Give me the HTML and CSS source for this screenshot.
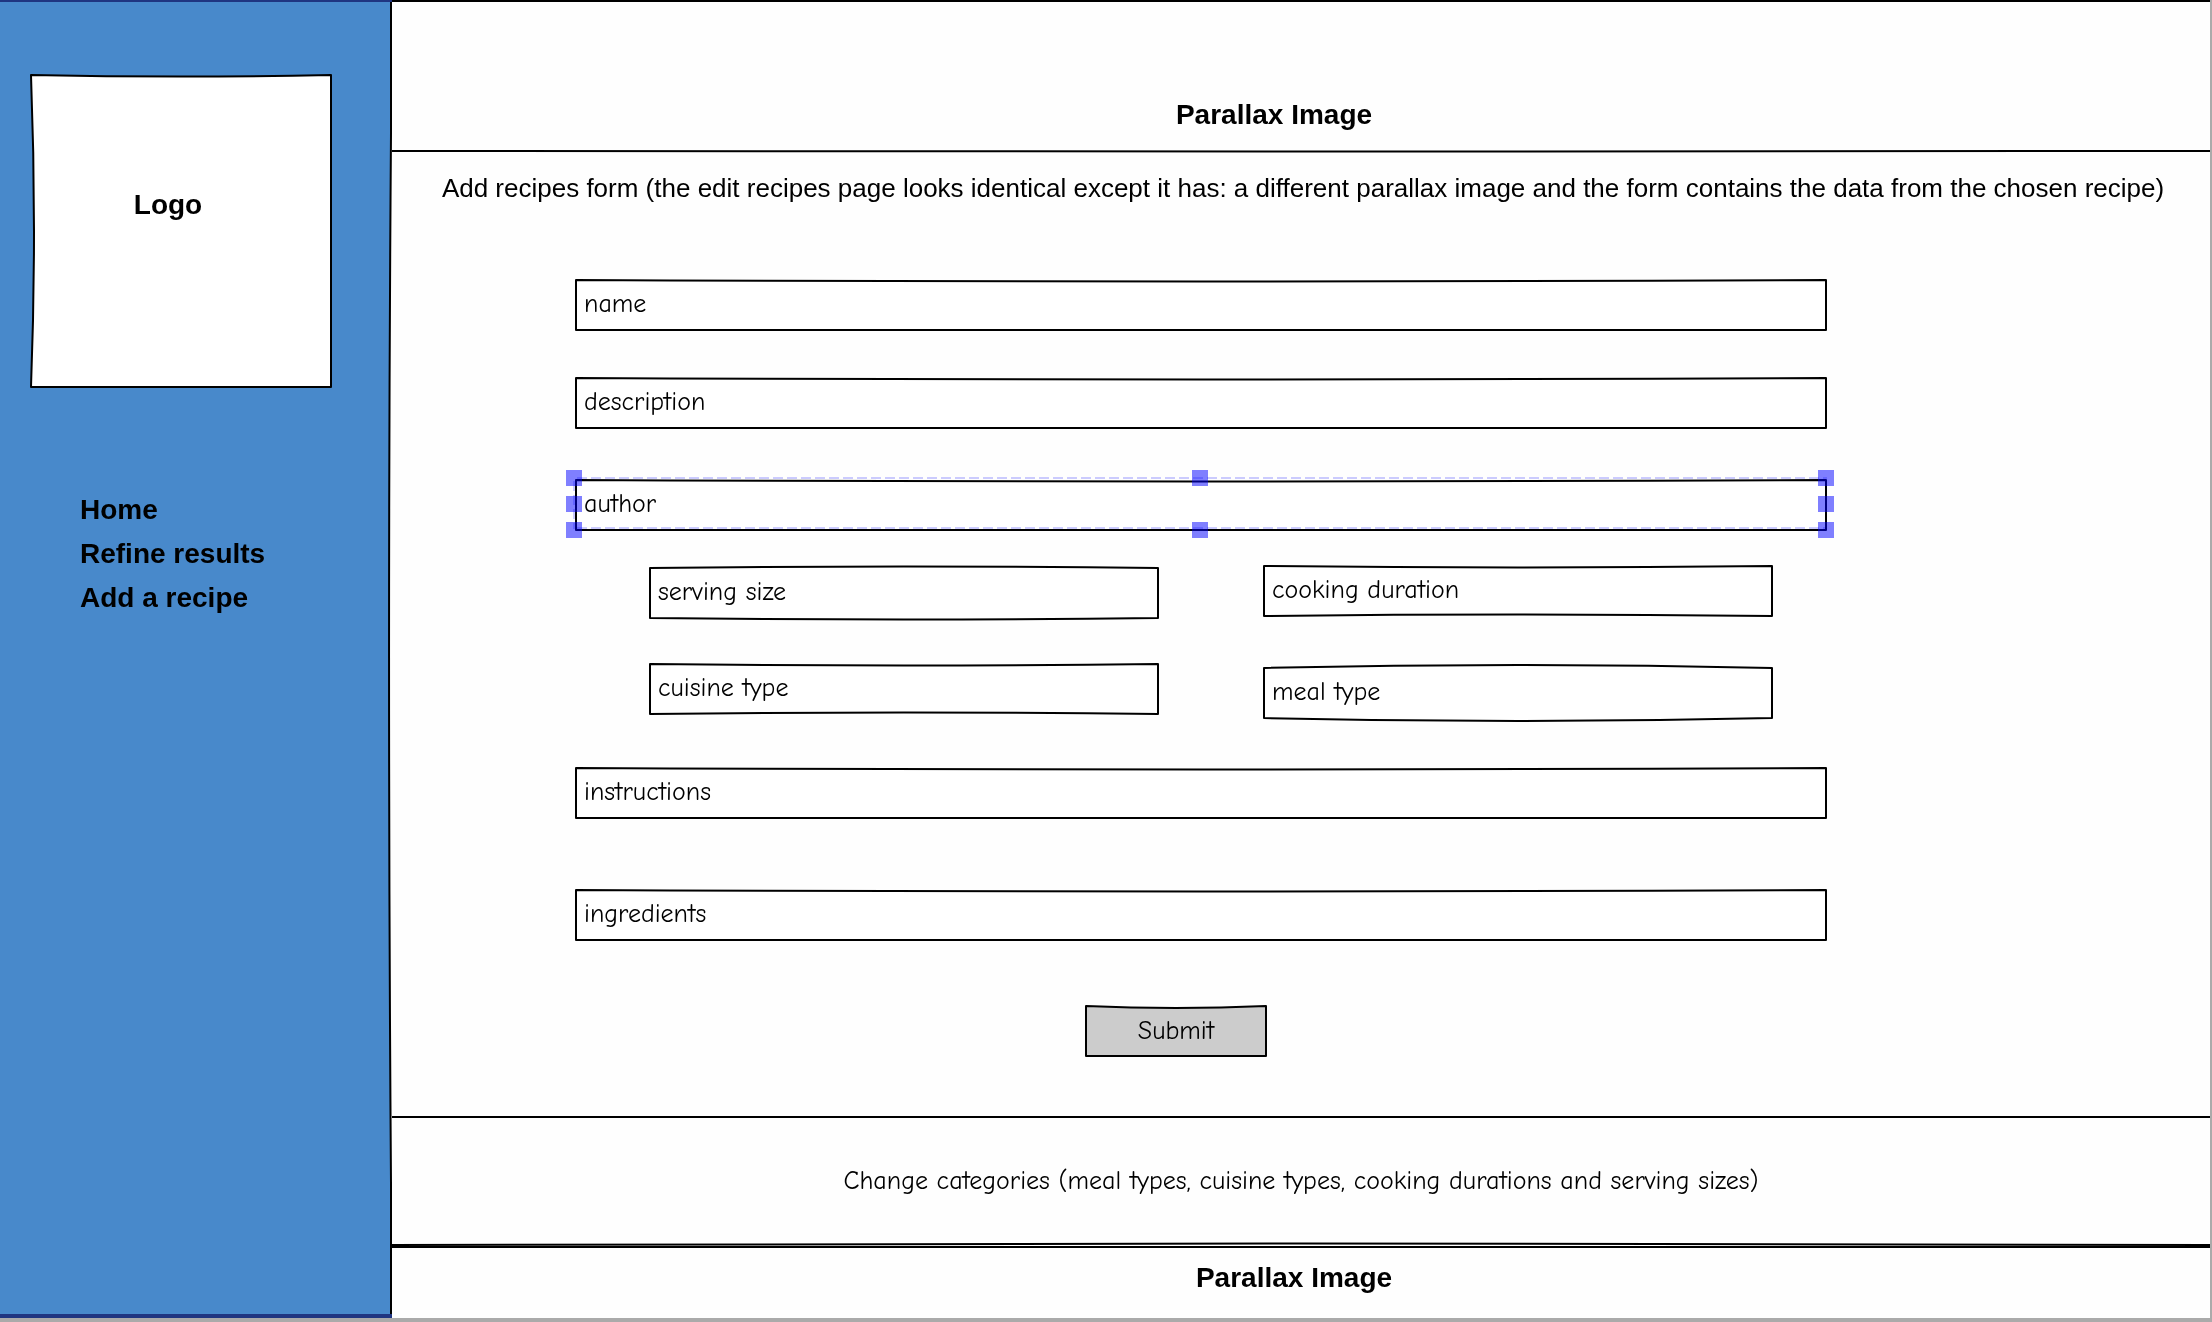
FILE: index.html
```html
<!DOCTYPE html>
<html lang="en">
<head>
<meta charset="utf-8">
<title>Add a recipe</title>
<link rel="stylesheet" href="styles.css">
</head>
<body>
<div class="page">
  <aside class="sidebar">
    <svg class="edge" viewBox="0 0 100 100" preserveAspectRatio="none" aria-hidden="true"><path class="panel" d="M0 0H100V10Q99 50 100 90V100H0Z"/><path class="stroke" d="M100 0V10Q99 50 100 90V100"/></svg>
    <div class="logo sketch">
      <svg class="outline" viewBox="0 0 100 100" preserveAspectRatio="none" aria-hidden="true"><path class="paper" d="M0 0Q50 1 100 0V100H0Q2 50 0 0Z"/></svg>
      <span class="title">Logo</span>
    </div>
    <nav class="nav">
      <a class="title" href="#home">Home</a>
      <a class="title" href="#refine">Refine results</a>
      <a class="title" href="#add">Add a recipe</a>
    </nav>
  </aside>
  <main class="main">
    <header class="hero">
      <h1 class="title">Parallax Image</h1>
      <svg class="rule" viewBox="0 0 100 2" preserveAspectRatio="none" aria-hidden="true"><path class="stroke" d="M0 1Q50 2 100 1"/></svg>
    </header>
    <section class="content">
      <p class="intro">Add recipes form (the edit recipes page looks identical except it has: a different parallax image and the form contains the data from the chosen recipe)</p>
      <form class="form">
        <div class="sketch name">
          <svg class="outline" viewBox="0 0 100 100" preserveAspectRatio="none" aria-hidden="true"><path class="paper" d="M0 0Q50 6 100 0V100H0Z"/></svg>
          <input class="input" type="text" aria-label="name" placeholder="name">
        </div>
        <div class="sketch description">
          <svg class="outline" viewBox="0 0 100 100" preserveAspectRatio="none" aria-hidden="true"><path class="paper" d="M0 0Q50 6 100 0V100H0Z"/></svg>
          <input class="input" type="text" aria-label="description" placeholder="description">
        </div>
        <div class="sketch author">
          <svg class="outline" viewBox="0 0 100 100" preserveAspectRatio="none" aria-hidden="true"><path class="paper" d="M0 0Q50 6 100 0V100H0Z"/></svg>
          <input class="input" type="text" aria-label="author" placeholder="author">
          <div class="selection" aria-hidden="true">
            <i class="handle"></i><i class="handle"></i><i class="handle"></i>
            <i class="handle"></i><i></i><i class="handle"></i>
            <i class="handle"></i><i class="handle"></i><i class="handle"></i>
          </div>
        </div>
        <div class="pairs">
          <div class="column">
            <div class="sketch">
              <svg class="outline" viewBox="0 0 100 100" preserveAspectRatio="none" aria-hidden="true"><path class="paper" d="M0 0Q50 -6 100 0V100Q50 106 0 100Z"/></svg>
              <input class="input" type="text" aria-label="serving size" placeholder="serving size">
            </div>
            <div class="sketch">
              <svg class="outline" viewBox="0 0 100 100" preserveAspectRatio="none" aria-hidden="true"><path class="paper" d="M0 0Q50 6 100 0V100Q50 94 0 100Z"/></svg>
              <input class="input" type="text" aria-label="cuisine type" placeholder="cuisine type">
            </div>
          </div>
          <div class="column column-right">
            <div class="sketch">
              <svg class="outline" viewBox="0 0 100 100" preserveAspectRatio="none" aria-hidden="true"><path class="paper" d="M0 0Q50 6 100 0V100Q50 94 0 100Z"/></svg>
              <input class="input" type="text" aria-label="cooking duration" placeholder="cooking duration">
            </div>
            <div class="sketch">
              <svg class="outline" viewBox="0 0 100 100" preserveAspectRatio="none" aria-hidden="true"><path class="paper" d="M0 0Q50 -12 100 0V100Q50 112 0 100Z"/></svg>
              <input class="input" type="text" aria-label="meal type" placeholder="meal type">
            </div>
          </div>
        </div>
        <div class="sketch instructions">
          <svg class="outline" viewBox="0 0 100 100" preserveAspectRatio="none" aria-hidden="true"><path class="paper" d="M0 0Q50 6 100 0V100H0Z"/></svg>
          <input class="input" type="text" aria-label="instructions" placeholder="instructions">
        </div>
        <div class="sketch ingredients">
          <svg class="outline" viewBox="0 0 100 100" preserveAspectRatio="none" aria-hidden="true"><path class="paper" d="M0 0Q50 6 100 0V100H0Z"/></svg>
          <input class="input" type="text" aria-label="ingredients" placeholder="ingredients">
        </div>
        <button class="submit sketch" type="submit">
          <svg class="outline" viewBox="0 0 100 100" preserveAspectRatio="none" aria-hidden="true"><path class="paper grey" d="M0 0Q50 8 100 0V100H0Z"/></svg>
          <span class="label">Submit</span>
        </button>
      </form>
    </section>
    <section class="categories">
      <p class="hand">Change categories (meal types, cuisine types, cooking durations and serving sizes)</p>
    </section>
    <footer class="footer">
      <svg class="rule" viewBox="0 0 100 2" preserveAspectRatio="none" aria-hidden="true"><path class="stroke" d="M0 1Q50 -2 100 1"/></svg>
      <h2 class="title">Parallax Image</h2>
    </footer>
  </main>
</div>
</body>
</html>
```
FILE: styles.css
```css
* {
  box-sizing: border-box;
}

body {
  margin: 0;
  background: #fefefe;
  color: #000;
  font-family: "Liberation Sans", Arial, sans-serif;
}

h1, h2, p {
  margin: 0;
}

.page {
  display: grid;
  grid-template-columns: 392px 1fr;
  min-height: 100vh;
  border-right: 2px solid #aaa;
  border-bottom: 4px solid #aaa;
}

.title {
  color: #000;
  font-size: 28px;
  font-weight: bold;
  line-height: 32px;
  text-decoration: none;
}

.stroke {
  fill: none;
  stroke: #000;
  stroke-width: 2px;
  vector-effect: non-scaling-stroke;
}

.panel {
  fill: #4889cb;
}

.paper {
  fill: #fff;
  stroke: #000;
  stroke-width: 2px;
  stroke-linejoin: round;
  vector-effect: non-scaling-stroke;
}

.grey {
  fill: #ccc;
}

/* Hand-drawn box: the outline lies behind the content */
.sketch {
  position: relative;
}

.outline {
  position: absolute;
  top: 1px;
  left: 1px;
  width: calc(100% - 2px);
  height: calc(100% - 2px);
  overflow: visible;
}

.sidebar {
  position: relative;
  padding: 72px 60px 0 30px;
  border-top: 2px solid #1f3581;
  border-bottom: 4px solid #1f3581;
}

.edge {
  position: absolute;
  top: 0;
  right: 1px;
  width: 391px;
  height: 100%;
  overflow: visible;
}

.logo {
  display: flex;
  justify-content: center;
  height: 314px;
  padding: 115px 26px 0 0;
}

.logo .title {
  position: relative;
}

.nav {
  position: relative;
  display: flex;
  flex-direction: column;
  align-items: flex-start;
  gap: 12px;
  margin: 106px 0 0 50px;
}

.main {
  display: flex;
  flex-direction: column;
}

.hero {
  padding: 97px 54px 0 0;
  border-top: 2px solid #000;
  text-align: center;
}

.rule {
  display: block;
  width: 100%;
  height: 2px;
  overflow: visible;
}

.hero .rule {
  width: calc(100% + 54px);
  margin-top: 19px;
}

.content {
  padding: 20px 0 59px;
  border-bottom: 2px solid #000;
}

.intro {
  padding-left: 4px;
  font-size: 26px;
  line-height: 32px;
  text-align: center;
}

.form {
  display: flex;
  flex-direction: column;
  padding: 75px 383px 0 183px;
}

.input,
.submit,
.hand {
  font-family: "Comic Sans MS", "Comic Neue", "Open Sans", sans-serif;
  font-size: 26px;
  line-height: 32px;
  color: #000;
}

.input {
  position: relative;
  display: block;
  width: 100%;
  height: 52px;
  padding: 0 9px 2px;
  border: 0;
  background: transparent;
  outline: 0;
}

.input::placeholder {
  color: #000;
  opacity: 1;
}

.description {
  margin-top: 46px;
}

.author {
  margin-top: 50px;
}

/* Selection frame with resize handles over the author field */
.selection {
  position: absolute;
  top: -9px;
  left: -9px;
  right: -7px;
  height: 68px;
  display: grid;
  grid-template-columns: repeat(3, 16px);
  grid-template-rows: repeat(3, 16px);
  justify-content: space-between;
  align-content: space-between;
  pointer-events: none;
}

.selection::before {
  content: "";
  position: absolute;
  inset: 7px;
  height: 52px;
  mix-blend-mode: multiply;
  background:
    repeating-linear-gradient(90deg, transparent 0 4px, #ccf 4px 14px) 0 0 / 100% 2px no-repeat,
    repeating-linear-gradient(90deg, transparent 0 4px, #ccf 4px 14px) 0 100% / 100% 2px no-repeat,
    repeating-linear-gradient(transparent 0 4px, #ccf 4px 14px) 0 0 / 2px 100% no-repeat,
    repeating-linear-gradient(transparent 0 4px, #ccf 4px 14px) 100% 0 / 2px 100% no-repeat;
}

.handle {
  position: relative;
  background: rgba(0, 0, 255, 0.5);
}

.pairs {
  display: grid;
  grid-template-columns: 1fr 1fr;
  gap: 104px;
  margin-top: 34px;
  padding: 0 54px 0 74px;
}

.column {
  display: flex;
  flex-direction: column;
  gap: 44px;
  padding-top: 2px;
}

.column-right {
  gap: 50px;
  padding-top: 0;
}

.instructions {
  margin-top: 48px;
}

.ingredients {
  margin-top: 70px;
}

.submit {
  align-self: center;
  width: 182px;
  height: 52px;
  margin: 64px 50px 0 0;
  padding: 0;
  border: 0;
  background: none;
}

.label {
  position: relative;
}

.categories {
  padding: 47px 0;
  text-align: center;
}

.footer {
  text-align: center;
}

.footer .title {
  padding: 14px 14px 24px 0;
  border-top: 2px solid #000;
}
```
